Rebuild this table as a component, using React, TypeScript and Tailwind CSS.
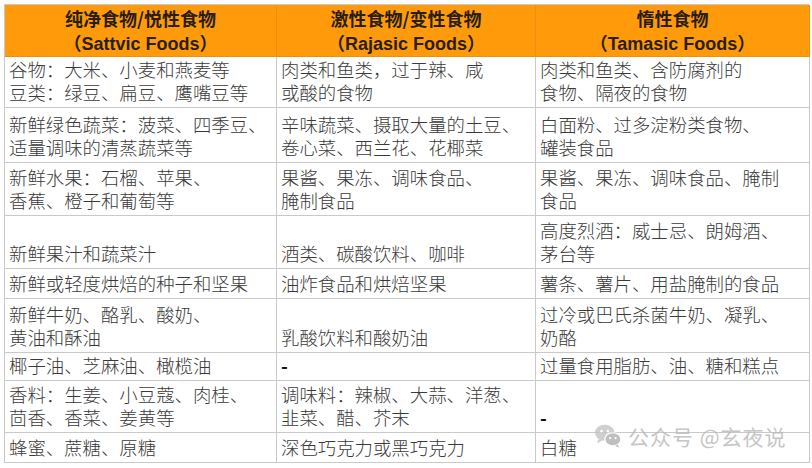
const HEADERS = [
  { zh: "纯净食物/悦性食物", en: "Sattvic Foods" },
  { zh: "激性食物/变性食物", en: "Rajasic Foods" },
  { zh: "惰性食物", en: "Tamasic Foods" },
]

// each cell: list of lines; row height in px
const ROWS: { h: number; cells: string[][] }[] = [
  {
    h: 51,
    cells: [
      ["谷物：大米、小麦和燕麦等", "豆类：绿豆、扁豆、鹰嘴豆等"],
      ["肉类和鱼类，过于辣、咸", "或酸的食物"],
      ["肉类和鱼类、含防腐剂的", "食物、隔夜的食物"],
    ],
  },
  {
    h: 55,
    cells: [
      ["新鲜绿色蔬菜：菠菜、四季豆、", "适量调味的清蒸蔬菜等"],
      ["辛味蔬菜、摄取大量的土豆、", "卷心菜、西兰花、花椰菜"],
      ["白面粉、过多淀粉类食物、", "罐装食品"],
    ],
  },
  {
    h: 53,
    cells: [
      ["新鲜水果：石榴、苹果、", "香蕉、橙子和葡萄等"],
      ["果酱、果冻、调味食品、", "腌制食品"],
      ["果酱、果冻、调味食品、腌制", "食品"],
    ],
  },
  {
    h: 53,
    cells: [
      ["新鲜果汁和蔬菜汁"],
      ["酒类、碳酸饮料、咖啡"],
      ["高度烈酒：威士忌、朗姆酒、", "茅台等"],
    ],
  },
  {
    h: 30,
    cells: [
      ["新鲜或轻度烘焙的种子和坚果"],
      ["油炸食品和烘焙坚果"],
      ["薯条、薯片、用盐腌制的食品"],
    ],
  },
  {
    h: 54,
    cells: [
      ["新鲜牛奶、酪乳、酸奶、", "黄油和酥油"],
      ["乳酸饮料和酸奶油"],
      ["过冷或巴氏杀菌牛奶、凝乳、", "奶酪"],
    ],
  },
  {
    h: 28,
    cells: [["椰子油、芝麻油、橄榄油"], ["-"], ["过量食用脂肪、油、糖和糕点"]],
  },
  {
    h: 52,
    cells: [
      ["香料：生姜、小豆蔻、肉桂、", "茴香、香菜、姜黄等"],
      ["调味料：辣椒、大蒜、洋葱、", "韭菜、醋、芥末"],
      ["-"],
    ],
  },
  {
    h: 30,
    cells: [["蜂蜜、蔗糖、原糖"], ["深色巧克力或黑巧克力"], ["白糖"]],
  },
]

function WeChatMark() {
  return (
    <svg width="28" height="26" viewBox="0 0 26 24" fill="none">
      <ellipse cx="10" cy="9" rx="9" ry="7.5" fill="#c4c4c4" />
      <path d="M4 15 L3 19 L8 16 Z" fill="#c4c4c4" />
      <ellipse cx="17.5" cy="15" rx="7.5" ry="6.2" fill="#b0b0b0" stroke="#fff" strokeWidth="1.2" />
      <path d="M22 20 L23.5 23 L19.5 21 Z" fill="#b0b0b0" />
      <circle cx="7" cy="7.5" r="1.2" fill="#fff" />
      <circle cx="13" cy="7.5" r="1.2" fill="#fff" />
      <circle cx="15" cy="14" r="1" fill="#fff" />
      <circle cx="20" cy="14" r="1" fill="#fff" />
    </svg>
  )
}

export default function App() {
  return (
    <div
      className="relative h-[468px] w-[812px] overflow-hidden bg-white pl-[4px] pt-[4px]"
      style={{ fontFamily: '"Noto Sans CJK SC", sans-serif' }}
    >
      <div className="grid w-[805px] grid-cols-[272px_259px_274px] border-l border-t border-[#c9c9c9]">
        {HEADERS.map((h) => (
          <div
            key={h.en}
            className="flex h-[52px] flex-col items-center justify-center border-b border-r border-[#e8920f] bg-[#ff9a0b] text-[18px] font-bold text-[#2a1e10]"
          >
            <div className="leading-[24px]">{h.zh}</div>
            <div className="leading-[24px]">
              （<span style={{ fontFamily: '"Liberation Sans", Arial, sans-serif' }}>{h.en}</span>）
            </div>
          </div>
        ))}
        {ROWS.map((row, ri) =>
          row.cells.map((lines, ci) => (
            <div
              key={`${ri}-${ci}`}
              className="flex flex-col justify-end border-b border-r border-[#c9c9c9] px-[4px] pb-[3px] text-[18.4px] font-light text-[#3a3a3a]"
              style={{ height: row.h }}
            >
              {lines.map((l) =>
                l === "-" ? (
                  <div key={l} className="h-[23px] font-bold leading-[23px] text-[#111]">
                    -
                  </div>
                ) : (
                  <div key={l} className="h-[23px] overflow-visible whitespace-nowrap leading-[23px]">
                    {l}
                  </div>
                )
              )}
            </div>
          ))
        )}
      </div>

      <div className="pointer-events-none absolute left-[594px] top-[423px] flex items-center gap-[6px] opacity-80">
        <WeChatMark />
        <div className="text-[21px] leading-[26px] tracking-[1px] text-[#b8b8b8]">公众号 @玄夜说</div>
      </div>
    </div>
  )
}
